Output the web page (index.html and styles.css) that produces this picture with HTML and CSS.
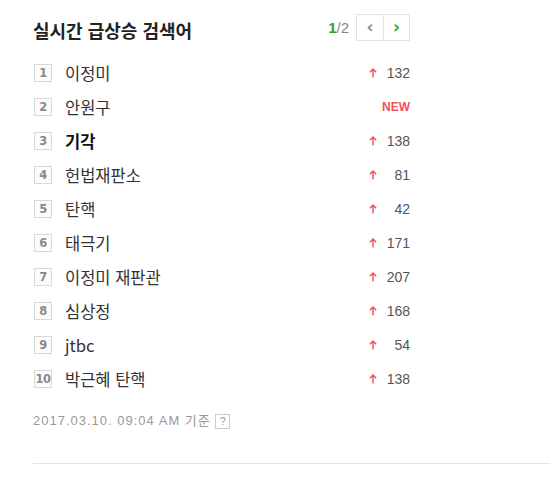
FILE: index.html
```html
<!DOCTYPE html>
<html lang="ko">
<head>
  <meta charset="UTF-8">
  <title>실시간 급상승 검색어</title>
  <link rel="stylesheet" href="styles.css">
</head>
<body>

  <div class="panel">
    <div class="head">
      <h2>실시간 급상승 검색어</h2>
      <div class="paging">
        <span class="page"><em>1</em>/2</span>
        <div class="btns">
          <button class="prev">&lsaquo;</button>
          <button class="next">&rsaquo;</button>
        </div>
      </div>
    </div>

    <ol class="rank" id="rank"></ol>

    <p class="time">2017.03.10. 09:04 AM 기준 <span class="help">?</span></p>
  </div>
  <div class="line"></div>

  <script>
    const keywords = [
      ['이정미', 132], ['안원구', 'NEW'], ['기각', 138], ['헌법재판소', 81],
      ['탄핵', 42], ['태극기', 171], ['이정미 재판관', 207], ['심상정', 168],
      ['jtbc', 54], ['박근혜 탄핵', 138]
    ];
    const arrow = '<svg width="8" height="10" viewBox="0 0 8 10"><path d="M4 9.5V1M0.8 4.2L4 1l3.2 3.2" fill="none" stroke="#e8535a" stroke-width="1.4"/></svg>';

    const list = document.getElementById('rank');
    keywords.forEach((item, i) => {
      const li = document.createElement('li');
      if (i === 2) li.className = 'on';
      let change;
      if (item[1] === 'NEW') {
        change = '<span class="change"><span class="new">NEW</span></span>';
      } else {
        change = `<span class="change">${arrow}<span class="num">${item[1]}</span></span>`;
      }
      li.innerHTML = `<span class="no">${i + 1}</span><span class="word">${item[0]}</span>${change}`;
      list.appendChild(li);
    });
  </script>

</body>
</html>
```

FILE: styles.css
```css
body {
  margin: 0;
  font-family: "Noto Sans CJK KR", "Liberation Sans", sans-serif;
  background: #fff;
}
.panel {
  width: 376px;
  padding-left: 34px;
}
.head {
  display: flex;
  align-items: center;
  justify-content: space-between;
  height: 56px;
}
.head h2 {
  margin: 0 0 0 -1px;
  font-size: 18px;
  font-weight: bold;
  color: #222;
  line-height: 26px;
  position: relative;
  top: 2px;
}
.paging {
  display: flex;
  align-items: center;
  margin-top: -1px;
}
.page {
  font-family: "Liberation Sans", sans-serif;
  font-size: 15px;
  color: #888;
  margin-right: 7px;
}
.page em {
  font-style: normal;
  font-weight: bold;
  color: #1fa71f;
}
.btns {
  display: flex;
  border: 1px solid #e3e3e3;
}
.btns button {
  width: 26px;
  height: 25px;
  padding: 0;
  border: none;
  background: #fff;
  font-family: "DejaVu Sans", sans-serif;
  font-size: 17px;
  font-weight: bold;
  line-height: 23px;
  color: #888;
  cursor: pointer;
}
.btns .next {
  border-left: 1px solid #e3e3e3;
  color: #1fa71f;
}
.rank {
  list-style: none;
  margin: 0;
  padding: 0;
}
.rank li {
  display: flex;
  align-items: center;
  height: 34px;
}
.no {
  width: 16px;
  height: 16px;
  border: 1px solid #d8d8d8;
  background: #fcfcfc;
  font-family: "DejaVu Sans", sans-serif;
  font-size: 11.5px;
  font-weight: bold;
  line-height: 16px;
  text-align: center;
  color: #888;
  letter-spacing: -0.5px;
}
.word {
  flex: 1;
  margin-left: 13px;
  font-size: 16.5px;
  color: #333;
}
.rank li.on .word {
  font-weight: bold;
  color: #111;
}
.change {
  display: flex;
  align-items: center;
  width: 41px;
  justify-content: flex-end;
}
.change svg {
  margin-right: auto;
}
.num {
  font-family: "Liberation Sans", sans-serif;
  font-size: 14px;
  color: #555;
}
.new {
  font-family: "Liberation Sans", sans-serif;
  font-size: 12px;
  font-weight: bold;
  color: #f0525a;
}
.time {
  margin: 14px 0 0 -1px;
  font-family: "Liberation Sans", "Noto Sans CJK KR", sans-serif;
  font-size: 13px;
  letter-spacing: 1px;
  color: #999;
}
.help {
  display: inline-block;
  width: 13px;
  height: 13px;
  border: 1px solid #ccc;
  font-size: 11px;
  line-height: 13px;
  text-align: center;
  letter-spacing: 0;
  color: #999;
}
.line {
  margin: 34px 0 0 33px;
  border-top: 1px solid #e5e5e5;
}
```
